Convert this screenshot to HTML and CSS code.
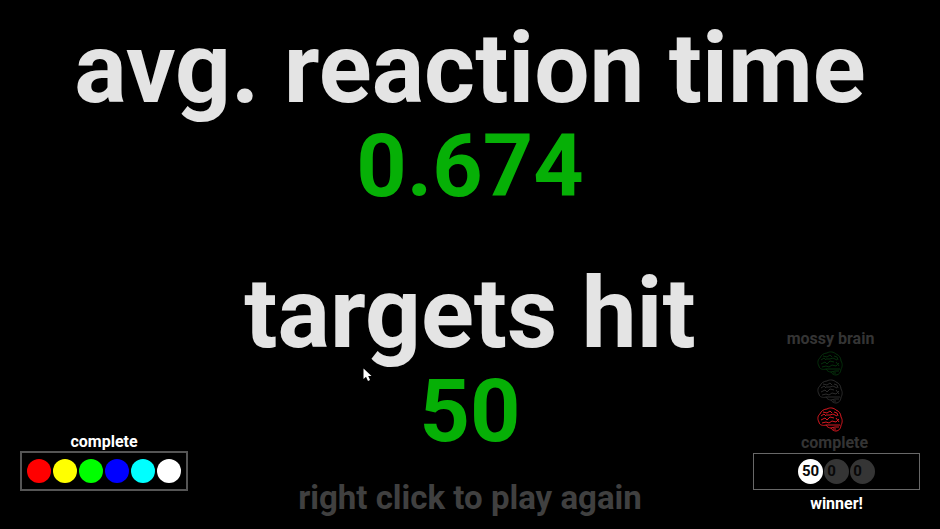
FILE: index.html
```html
<!DOCTYPE html>
<html lang="en">
<head>
<meta charset="utf-8">
<meta name="viewport" content="width=device-width, initial-scale=1">
<title>Results</title>
<link rel="stylesheet" href="styles.css">
</head>
<body>
<svg class="defs" aria-hidden="true">
  <symbol id="brain" viewBox="0 0 26 25">
    <path d="M2 15C0 12 1 8 3 7C4 4 7 2 10 2C13 0 17 1 19 3C22 4 24 7 24 10C26 13 25 17 24 18C24 21 22 24 19 24C17 24 15 23 14 21C12 21 10 20 9 18C6 19 2 18 2 15Z"/>
    <path d="M4 9L7 7L9 9M6 5L10 6L13 4L15 6M4 13L8 11L10 13L13 10L17 11M9 8L13 8L16 7L20 9M5 16L9 15L12 16L15 14L19 15L22 12M17 5L20 6L21 9M19 11L22 15M9 18L14 18L18 18L23 18M14 21L18 20L22 20M16 22L19 22"/>
  </symbol>
</svg>
<main class="screen">
  <section class="results">
    <dl class="stats">
      <div class="stat"><dt>avg. reaction time</dt><dd>0.674</dd></div>
      <div class="stat"><dt>targets hit</dt><dd>50</dd></div>
    </dl>
    <p class="hint">right click to play again</p>
  </section>
  <aside class="panel panel-left">
    <p class="label">complete</p>
    <div class="tray tray-colors">
      <span class="dot red"></span><span class="dot yellow"></span><span class="dot green"></span><span class="dot blue"></span><span class="dot cyan"></span><span class="dot white"></span>
    </div>
  </aside>
  <aside class="panel panel-right">
    <div class="player">
      <p class="label dim">mossy brain</p>
      <svg class="brain brain-green"><use href="#brain"/></svg>
      <svg class="brain brain-gray"><use href="#brain"/></svg>
      <svg class="brain brain-red"><use href="#brain"/></svg>
    </div>
    <p class="label dim status">complete</p>
    <div class="tray tray-scores">
      <span class="dot white">50</span><span class="dot off">0</span><span class="dot off">0</span>
    </div>
    <p class="label">winner!</p>
  </aside>
  <svg class="cursor" viewBox="0 0 9 14" aria-hidden="true"><path d="M0.5 0.5V11L3 8.8L5 13L7 12L5.200 8H8.500Z"/></svg>
</main>
</body>
</html>
```
FILE: styles.css
```css
* { box-sizing: border-box; }

body {
  margin: 0;
  background: #000;
  color: #fff;
  font-family: Roboto, "Liberation Sans", sans-serif;
  font-weight: 700;
}

p, dl, dd { margin: 0; }

.defs { position: absolute; width: 0; height: 0; }

.screen {
  position: relative;
  display: grid;
  min-height: 100vh;
  overflow: hidden;
}

.results, .panel { grid-area: 1 / 1; }

.results {
  padding-top: 16px;
  text-align: center;
}

.stats { display: grid; gap: 51px; }

.stat dt {
  color: #e4e4e4;
  font-size: 98px;
  line-height: 106px;
  white-space: nowrap;
}

.stat dd {
  color: #06b006;
  font-size: 88px;
  line-height: 88px;
}

.hint {
  margin-top: 23px;
  color: #404040;
  font-size: 33px;
  line-height: 40px;
}

.panel {
  display: flex;
  flex-direction: column;
  align-items: center;
  align-self: end;
}

.panel-left {
  justify-self: start;
  margin: 0 0 38px 20px;
}

.panel-right {
  justify-self: end;
  margin: 0 20px 16px 0;
}

.label {
  font-size: 16px;
  line-height: 18px;
}

.dim { color: #343434; }

.status {
  padding-right: 4px;
  line-height: 20px;
}

.player {
  display: flex;
  flex-direction: column;
  align-items: center;
  gap: 3px;
  padding: 0 12px 1px 0;
}

.brain {
  width: 26px;
  height: 25px;
  fill: none;
  stroke-width: 1;
}

.brain-green { stroke: #06300c; }
.brain-gray { stroke: #2c2c2c; }
.brain-red { stroke: #d81820; }

.tray {
  display: flex;
  align-items: center;
  justify-content: center;
  gap: 2px;
}

.tray-colors {
  padding: 6px 5px;
  border: 2px solid #555;
}

.tray-scores {
  gap: 1px;
  padding: 5px 44px;
  border: 1px solid #686868;
  margin-bottom: 5px;
}

.dot {
  width: 24px;
  height: 24px;
  border-radius: 50%;
  color: #080808;
  font-size: 15px;
  line-height: 24px;
  text-align: center;
}

.tray-scores .dot { width: 25px; height: 25px; line-height: 25px; }

.red { background: #f00; }
.yellow { background: #ff0; }
.green { background: #0f0; }
.blue { background: #00f; }
.cyan { background: #0ff; }
.white { background: #fff; }
.off { background: #353535; padding-right: 10px; }

.cursor {
  position: absolute;
  left: 363px;
  top: 368px;
  width: 9px;
  height: 14px;
  fill: #fff;
}
```
